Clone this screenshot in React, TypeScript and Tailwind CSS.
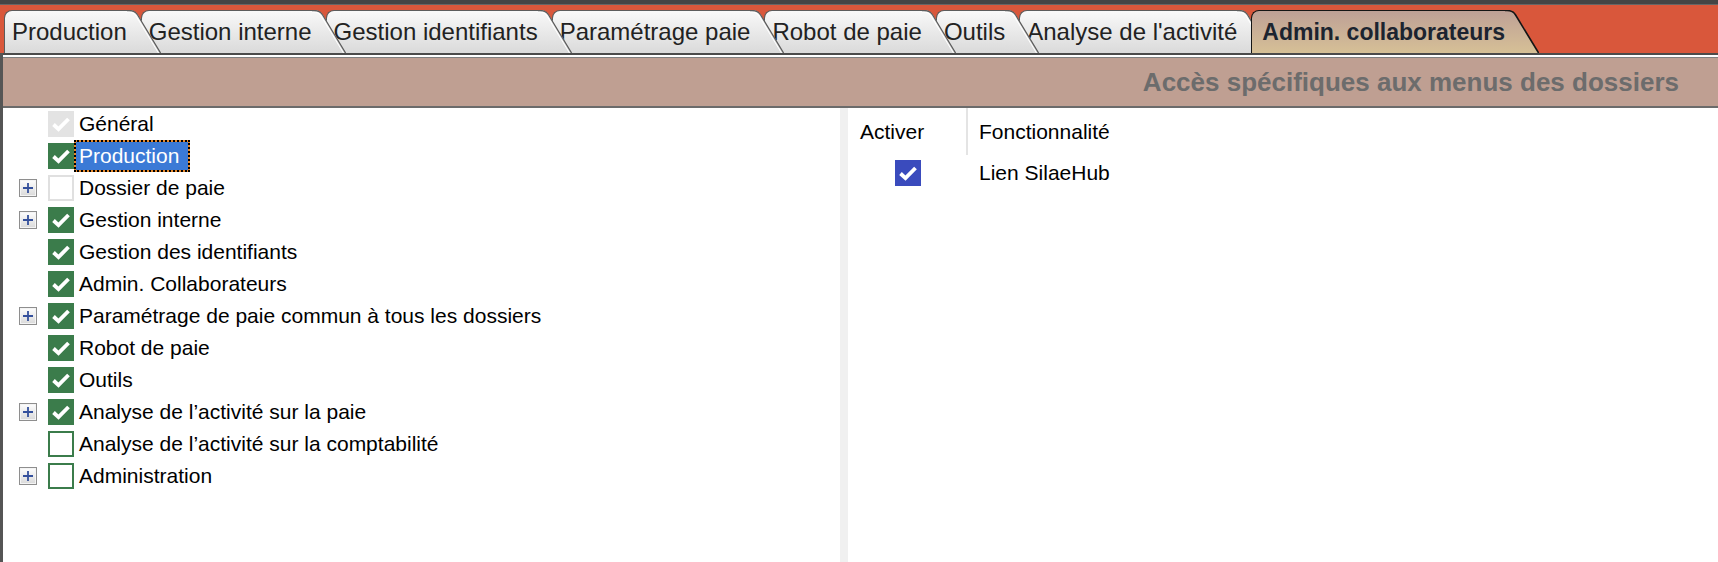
import React from 'react';

type NodeState = 'disabled' | 'checked' | 'empty' | 'unchecked';

type TreeNode = {
    label: string;
    state: NodeState;
    plus?: boolean;
    selected?: boolean;
};

const tabs = [
    'Production',
    'Gestion interne',
    'Gestion identifiants',
    'Paramétrage paie',
    'Robot de paie',
    'Outils',
    "Analyse de l'activité",
    'Admin. collaborateurs',
];

const tree: TreeNode[] = [
    { label: 'Général', state: 'disabled' },
    { label: 'Production', state: 'checked', selected: true },
    { label: 'Dossier de paie', state: 'empty', plus: true },
    { label: 'Gestion interne', state: 'checked', plus: true },
    { label: 'Gestion des identifiants', state: 'checked' },
    { label: 'Admin. Collaborateurs', state: 'checked' },
    { label: 'Paramétrage de paie commun à tous les dossiers', state: 'checked', plus: true },
    { label: 'Robot de paie', state: 'checked' },
    { label: 'Outils', state: 'checked' },
    { label: 'Analyse de l’activité sur la paie', state: 'checked', plus: true },
    { label: 'Analyse de l’activité sur la comptabilité', state: 'unchecked' },
    { label: 'Administration', state: 'unchecked', plus: true },
];

function Tab({ label, index, active }: { label: string; index: number; active: boolean }) {
    const gid = `tab-grad-${index}`;
    const top = active ? '#bea096' : '#f9f9f9';
    const bottom = active ? '#d6c096' : '#dadada';
    const stroke = active ? '#151515' : '#5c5c5c';
    // earlier tabs lie over later ones, the active tab over all
    const z = active ? 50 : 20 - index;

    return (
        <div className="relative flex h-[43px] mr-[-20px]" style={{ zIndex: z }}>
            <div
                className={
                    active
                        ? 'flex h-full items-center pl-[10px] rounded-tl-[8px] border-l border-t border-[#151515] bg-linear-to-b from-[#bea096] to-[#d6c096] text-[23px] font-bold text-[#1c2430] leading-none whitespace-nowrap'
                        : 'flex h-full items-center pl-[7px] rounded-tl-[8px] border-l border-t border-[#5c5c5c] bg-linear-to-b from-[#f9f9f9] to-[#dadada] text-[24px] text-[#222] leading-none whitespace-nowrap'
                }
            >
                {label}
            </div>
            <svg width="34" height="43" viewBox="0 0 34 43" className="block shrink-0">
                <defs>
                    <linearGradient id={gid} x1="0" y1="0" x2="0" y2="1">
                        <stop offset="0" stopColor={top} />
                        <stop offset="1" stopColor={bottom} />
                    </linearGradient>
                </defs>
                <path d="M0 0 H2 Q8 0 11 5 L34 43 H0 Z" fill={`url(#${gid})`} />
                {!active && (
                    <path d="M0 2 H1.5 Q6.5 2 9.3 6.5 L31.5 43" fill="none" stroke="#ffffff" strokeWidth="1" />
                )}
                <path
                    d="M0 0.5 H2 Q8 0.5 10.6 5 L33.6 43"
                    fill="none"
                    stroke={stroke}
                    strokeWidth={active ? 1.6 : 1.3}
                />
            </svg>
        </div>
    );
}

function PlusBox() {
    return (
        <svg width="18" height="18" viewBox="0 0 18 18" className="block">
            <defs>
                <linearGradient id="plus-grad" x1="0" y1="0" x2="0" y2="1">
                    <stop offset="0" stopColor="#ffffff" />
                    <stop offset="1" stopColor="#d8d8d8" />
                </linearGradient>
            </defs>
            <rect x="0.5" y="0.5" width="17" height="17" fill="url(#plus-grad)" stroke="#8e8e8e" />
            <rect x="1.5" y="1.5" width="15" height="15" fill="none" stroke="#f4f4f4" />
            <path d="M4 9 H14 M9 4 V14" stroke="#34509c" strokeWidth="1.8" />
        </svg>
    );
}

function Check({ color = '#ffffff' }: { color?: string }) {
    return (
        <svg width="26" height="26" viewBox="0 0 26 26" className="block">
            <polyline
                points="5.5,13.5 10.5,18.2 20.5,8"
                fill="none"
                stroke={color}
                strokeWidth="3.8"
                strokeLinejoin="miter"
            />
        </svg>
    );
}

function TreeCheckbox({ state }: { state: NodeState }) {
    if (state === 'disabled') {
        return (
            <div className="w-[26px] h-[26px] bg-[#e3e3e3]">
                <Check />
            </div>
        );
    }
    if (state === 'checked') {
        return (
            <div className="w-[26px] h-[26px] bg-[#3b7c4b]">
                <Check />
            </div>
        );
    }
    if (state === 'empty') {
        return <div className="w-[26px] h-[26px] bg-white border-2 border-[#e0e0e0]" />;
    }
    return <div className="w-[26px] h-[26px] bg-white border-2 border-[#3b7c4b]" />;
}

export default function App() {
    return (
        <div className="w-[1718px] h-[562px] overflow-hidden bg-white flex flex-col font-['Liberation_Sans',Arial,sans-serif]">
            {/* Tab strip */}
            <div className="h-[53px] shrink-0 bg-[#d9573b] border-t-[4px] border-[#454545] flex flex-col">
                <div className="h-[1px] bg-[#666]" />
                <div className="flex flex-1 items-end pl-[4px]">
                    {tabs.map((t, i) => (
                        <Tab key={t} label={t} index={i} active={i === tabs.length - 1} />
                    ))}
                </div>
            </div>

            <div className="flex flex-1 flex-col border-l-[3px] border-[#555]">
                {/* separator lines under the tabs */}
                <div className="h-[2px] bg-[#4b4b4b]" />
                <div className="h-[2px] bg-white" />
                <div className="h-[1px] bg-[#808080]" />

                {/* Section header */}
                <div className="h-[50px] shrink-0 bg-[#bf9f92] border-b-2 border-[#6b6b6b] flex items-center justify-end pr-[39px]">
                    <span className="text-[26px] font-bold text-[#6c6c6c] leading-none">
                        Accès spécifiques aux menus des dossiers
                    </span>
                </div>

                <div className="flex flex-1">
                    {/* Tree of menus */}
                    <div className="w-[837px] shrink-0 text-[21px] text-black">
                        {tree.map((n) => (
                            <div key={n.label} className="flex h-[32px] items-center">
                                <div className="w-[45px] pl-[16px] shrink-0">{n.plus && <PlusBox />}</div>
                                <TreeCheckbox state={n.state} />
                                {n.selected ? (
                                    <span className="border-2 border-dotted border-black bg-[#e8892a] h-[32px] flex">
                                        <span className="bg-[#3b7ad6] text-white pl-[3px] pr-[9px] flex items-center whitespace-nowrap">
                                            {n.label}
                                        </span>
                                    </span>
                                ) : (
                                    <span className="pl-[5px] whitespace-nowrap">{n.label}</span>
                                )}
                            </div>
                        ))}
                    </div>

                    {/* Splitter */}
                    <div className="w-[8px] shrink-0 bg-[#f0f0f0]" />

                    {/* Functionalities grid */}
                    <div className="flex-1 text-[21px] text-black">
                        <div className="flex h-[47px]">
                            <div className="w-[118px] pl-[12px] flex items-center">Activer</div>
                            <div className="w-[2px] bg-[#e4e4e4]" />
                            <div className="pl-[11px] flex items-center">Fonctionnalité</div>
                        </div>
                        <div className="flex h-[36px] items-center">
                            <div className="w-[120px] flex justify-center">
                                <div className="w-[26px] h-[26px] bg-[#3a4bbd]">
                                    <Check />
                                </div>
                            </div>
                            <div className="pl-[11px]">Lien SilaeHub</div>
                        </div>
                    </div>
                </div>
            </div>
        </div>
    );
}
